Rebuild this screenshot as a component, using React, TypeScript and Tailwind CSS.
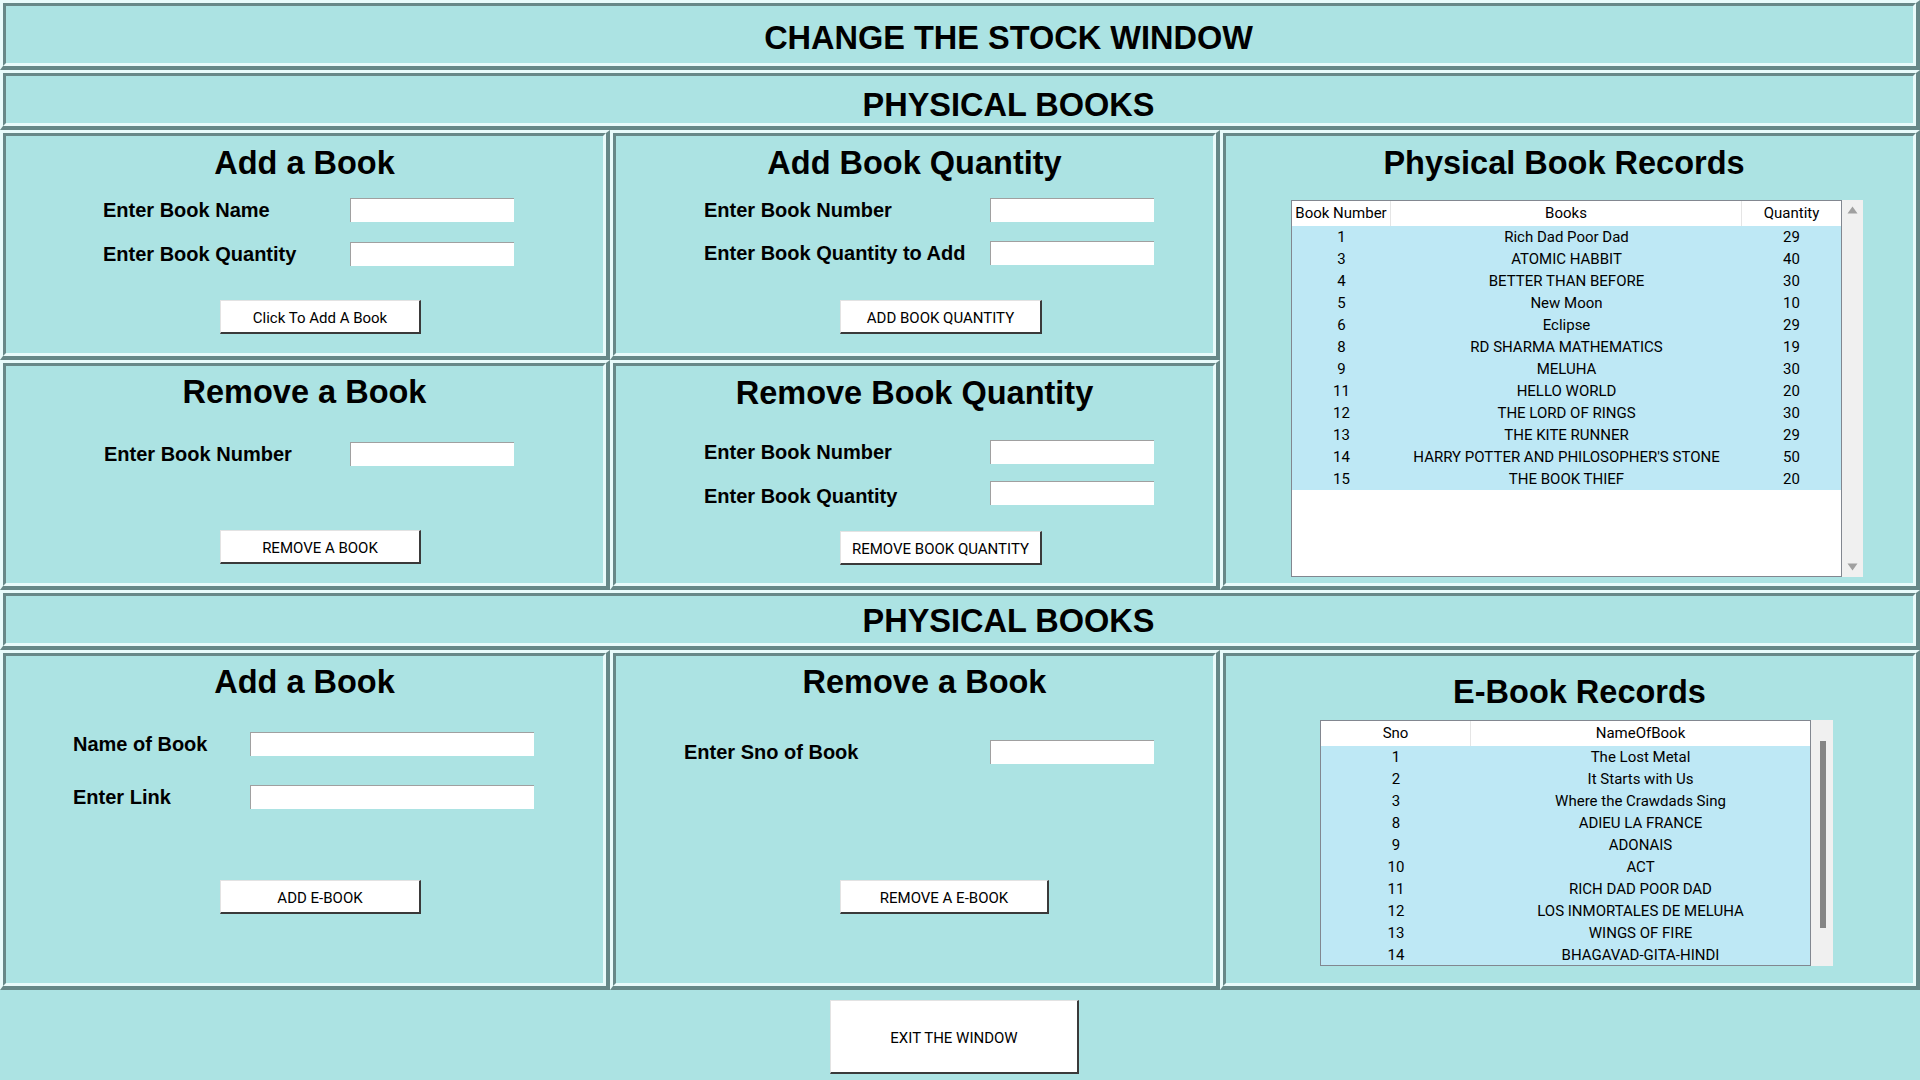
import React from 'react';

const physicalBooks = [
  { no: 1, name: 'Rich Dad Poor Dad', qty: 29 },
  { no: 3, name: 'ATOMIC HABBIT', qty: 40 },
  { no: 4, name: 'BETTER THAN BEFORE', qty: 30 },
  { no: 5, name: 'New Moon', qty: 10 },
  { no: 6, name: 'Eclipse', qty: 29 },
  { no: 8, name: 'RD SHARMA MATHEMATICS', qty: 19 },
  { no: 9, name: 'MELUHA', qty: 30 },
  { no: 11, name: 'HELLO WORLD', qty: 20 },
  { no: 12, name: 'THE LORD OF RINGS', qty: 30 },
  { no: 13, name: 'THE KITE RUNNER', qty: 29 },
  { no: 14, name: "HARRY POTTER AND PHILOSOPHER'S STONE", qty: 50 },
  { no: 15, name: 'THE BOOK THIEF', qty: 20 },
];

const eBooks = [
  { sno: 1, name: 'The Lost Metal' },
  { sno: 2, name: 'It Starts with Us' },
  { sno: 3, name: 'Where the Crawdads Sing' },
  { sno: 8, name: 'ADIEU LA FRANCE' },
  { sno: 9, name: 'ADONAIS' },
  { sno: 10, name: 'ACT' },
  { sno: 11, name: 'RICH DAD POOR DAD' },
  { sno: 12, name: 'LOS INMORTALES DE MELUHA' },
  { sno: 13, name: 'WINGS OF FIRE' },
  { sno: 14, name: 'BHAGAVAD-GITA-HINDI' },
];

// Tk style "ridge" frame: light outside top-left, dark inside; reversed on bottom-right
function Ridge({ className = '', children }: { className?: string; children?: React.ReactNode }) {
  return (
    <div
      className={`border-t-[3px] border-l-[3px] border-b-[4px] border-r-[4px] border-t-[#e9fbfb] border-l-[#e9fbfb] border-b-[#678888] border-r-[#678888] ${className}`}
    >
      <div className="h-full w-full border-t-[3px] border-l-[3px] border-b-[3px] border-r-[3px] border-t-[#678888] border-l-[#678888] border-b-[#e9fbfb] border-r-[#e9fbfb]">
        {children}
      </div>
    </div>
  );
}

function Field({
  label,
  wrap,
  labelW,
  inputW,
}: {
  label: string;
  wrap: string;
  labelW: string;
  inputW: string;
}) {
  return (
    <div className={`flex h-[24px] items-center ${wrap}`}>
      <span className={`shrink-0 text-[20px] font-bold leading-none text-black ${labelW}`}>{label}</span>
      <input
        type="text"
        className={`h-[24px] shrink-0 border-t border-l border-[#a0a0a0] border-r-0 border-b-0 bg-white outline-none ${inputW}`}
      />
    </div>
  );
}

function TkButton({ text, className }: { text: string; className: string }) {
  return (
    <button
      className={`flex shrink-0 items-center justify-center border-t border-l border-t-[#e3e3e3] border-l-[#e3e3e3] border-b-2 border-r-2 border-b-[#3a3a3a] border-r-[#3a3a3a] bg-white pt-[3px] font-['Roboto',sans-serif] text-[15px] text-black ${className}`}
    >
      {text}
    </button>
  );
}

function Title({ text, className }: { text: string; className: string }) {
  return <h2 className={`flex items-center justify-center text-[32.5px] font-bold text-black ${className}`}>{text}</h2>;
}

function Triangle({ up }: { up?: boolean }) {
  return (
    <svg width="11" height="8" viewBox="0 0 11 8">
      <path d={up ? 'M0.5 7.5 L5.5 0.5 L10.5 7.5 Z' : 'M0.5 0.5 L5.5 7.5 L10.5 0.5 Z'} fill="#a0a0a0" />
    </svg>
  );
}

function PhysicalTable() {
  return (
    <div className="ml-[65px] mt-[10px] flex h-[377px] w-[572px] font-['Roboto',sans-serif] text-[15px] text-black">
      <div className="flex h-full w-[551px] flex-col border border-[#828790] bg-white">
        <div className="flex h-[25px] shrink-0 bg-white">
          <div className="flex w-[99px] items-center justify-center border-r border-[#e5e5e5]">Book Number</div>
          <div className="flex w-[351px] items-center justify-center border-r border-[#e5e5e5]">Books</div>
          <div className="flex w-[99px] items-center justify-center">Quantity</div>
        </div>
        {physicalBooks.map((b) => (
          <div key={b.no} className="flex h-[22px] shrink-0 bg-[#bee8f5]">
            <div className="flex w-[99px] items-center justify-center">{b.no}</div>
            <div className="flex w-[351px] items-center justify-center whitespace-nowrap">{b.name}</div>
            <div className="flex w-[99px] items-center justify-center">{b.qty}</div>
          </div>
        ))}
      </div>
      <div className="flex h-full w-[21px] flex-col items-center justify-between bg-[#f0f0f0] py-[6px]">
        <Triangle up />
        <Triangle />
      </div>
    </div>
  );
}

function EBookTable() {
  return (
    <div className="ml-[94px] mt-[8px] flex h-[246px] w-[513px] font-['Roboto',sans-serif] text-[15px] text-black">
      <div className="flex h-full w-[491px] flex-col overflow-hidden border border-[#828790] bg-white">
        <div className="flex h-[25px] shrink-0 bg-white">
          <div className="flex w-[150px] items-center justify-center border-r border-[#e5e5e5]">Sno</div>
          <div className="flex flex-1 items-center justify-center">NameOfBook</div>
        </div>
        {eBooks.map((b) => (
          <div key={b.sno} className="flex h-[22px] shrink-0 bg-[#bee8f5]">
            <div className="flex w-[150px] items-center justify-center">{b.sno}</div>
            <div className="flex flex-1 items-center justify-center whitespace-nowrap">{b.name}</div>
          </div>
        ))}
      </div>
      <div className="h-full w-[22px] bg-[#f0f0f0] pl-[9px] pt-[21px]">
        <div className="h-[187px] w-[6px] bg-[#858585]" />
      </div>
    </div>
  );
}

export default function App() {
  return (
    <div className="h-[1080px] w-[1920px] overflow-hidden bg-[#ace3e3] font-['Liberation_Sans',Arial,sans-serif] text-black">
      <Ridge className="h-[70px]">
        <div className="flex h-full items-center justify-center pl-[98px] pt-[7px] text-[32.5px] font-bold">
          CHANGE THE STOCK WINDOW
        </div>
      </Ridge>
      <Ridge className="h-[60px]">
        <div className="flex h-full items-center justify-center pl-[98px] pt-[11px] text-[32.5px] font-bold">
          PHYSICAL BOOKS
        </div>
      </Ridge>

      <div className="flex h-[460px]">
        <div className="flex w-[610px] flex-col">
          <Ridge className="h-[230px]">
            <div className="flex flex-col">
              <Title text="Add a Book" className="h-[54px]" />
              <Field label="Enter Book Name" wrap="mt-[8px] pl-[97px]" labelW="w-[247px]" inputW="w-[164px]" />
              <Field label="Enter Book Quantity" wrap="mt-[20px] pl-[97px]" labelW="w-[247px]" inputW="w-[164px]" />
              <TkButton text="Click To Add A Book" className="ml-[214px] mt-[34px] h-[34px] w-[201px]" />
            </div>
          </Ridge>
          <Ridge className="h-[230px]">
            <div className="flex flex-col">
              <Title text="Remove a Book" className="h-[52px]" />
              <Field label="Enter Book Number" wrap="mt-[24px] pl-[98px]" labelW="w-[246px]" inputW="w-[164px]" />
              <TkButton text="REMOVE A BOOK" className="ml-[214px] mt-[64px] h-[34px] w-[201px]" />
            </div>
          </Ridge>
        </div>

        <div className="flex w-[610px] flex-col">
          <Ridge className="h-[230px]">
            <div className="flex flex-col">
              <Title text="Add Book Quantity" className="h-[54px]" />
              <Field label="Enter Book Number" wrap="mt-[8px] pl-[88px]" labelW="w-[286px]" inputW="w-[164px]" />
              <Field label="Enter Book Quantity to Add" wrap="mt-[19px] pl-[88px]" labelW="w-[286px]" inputW="w-[164px]" />
              <TkButton text="ADD BOOK QUANTITY" className="ml-[224px] mt-[35px] h-[34px] w-[202px]" />
            </div>
          </Ridge>
          <Ridge className="h-[230px]">
            <div className="flex flex-col">
              <Title text="Remove Book Quantity" className="h-[54px]" />
              <Field label="Enter Book Number" wrap="mt-[20px] pl-[88px]" labelW="w-[286px]" inputW="w-[164px]" />
              <Field label="Enter Book Quantity" wrap="mt-[17px] pl-[88px]" labelW="w-[286px] pt-[5px]" inputW="w-[164px]" />
              <TkButton text="REMOVE BOOK QUANTITY" className="ml-[224px] mt-[26px] h-[34px] w-[202px]" />
            </div>
          </Ridge>
        </div>

        <Ridge className="h-full w-[700px]">
          <div className="flex flex-col">
            <Title text="Physical Book Records" className="h-[54px] pr-[11px]" />
            <PhysicalTable />
          </div>
        </Ridge>
      </div>

      <Ridge className="h-[60px]">
        <div className="flex h-full items-center justify-center pl-[98px] pt-[3px] text-[32.5px] font-bold">
          PHYSICAL BOOKS
        </div>
      </Ridge>

      <div className="flex h-[340px]">
        <Ridge className="h-full w-[610px]">
          <div className="flex flex-col">
            <Title text="Add a Book" className="h-[52px]" />
            <Field label="Name of Book" wrap="mt-[24px] pl-[67px]" labelW="w-[177px]" inputW="w-[284px]" />
            <Field label="Enter Link" wrap="mt-[29px] pl-[67px]" labelW="w-[177px]" inputW="w-[284px]" />
            <TkButton text="ADD E-BOOK" className="ml-[214px] mt-[71px] h-[34px] w-[201px]" />
          </div>
        </Ridge>
        <Ridge className="h-full w-[610px]">
          <div className="flex flex-col">
            <Title text="Remove a Book" className="h-[52px] pl-[20px]" />
            <Field label="Enter Sno of Book" wrap="mt-[32px] pl-[68px]" labelW="w-[306px]" inputW="w-[164px]" />
            <TkButton text="REMOVE A E-BOOK" className="ml-[224px] mt-[116px] h-[34px] w-[209px]" />
          </div>
        </Ridge>
        <Ridge className="h-full w-[700px]">
          <div className="flex flex-col">
            <Title text="E-Book Records" className="mt-[16px] h-[40px] pl-[20px]" />
            <EBookTable />
          </div>
        </Ridge>
      </div>

      <div className="pl-[830px] pt-[10px]">
        <TkButton text="EXIT THE WINDOW" className="h-[74px] w-[249px]" />
      </div>
    </div>
  );
}
